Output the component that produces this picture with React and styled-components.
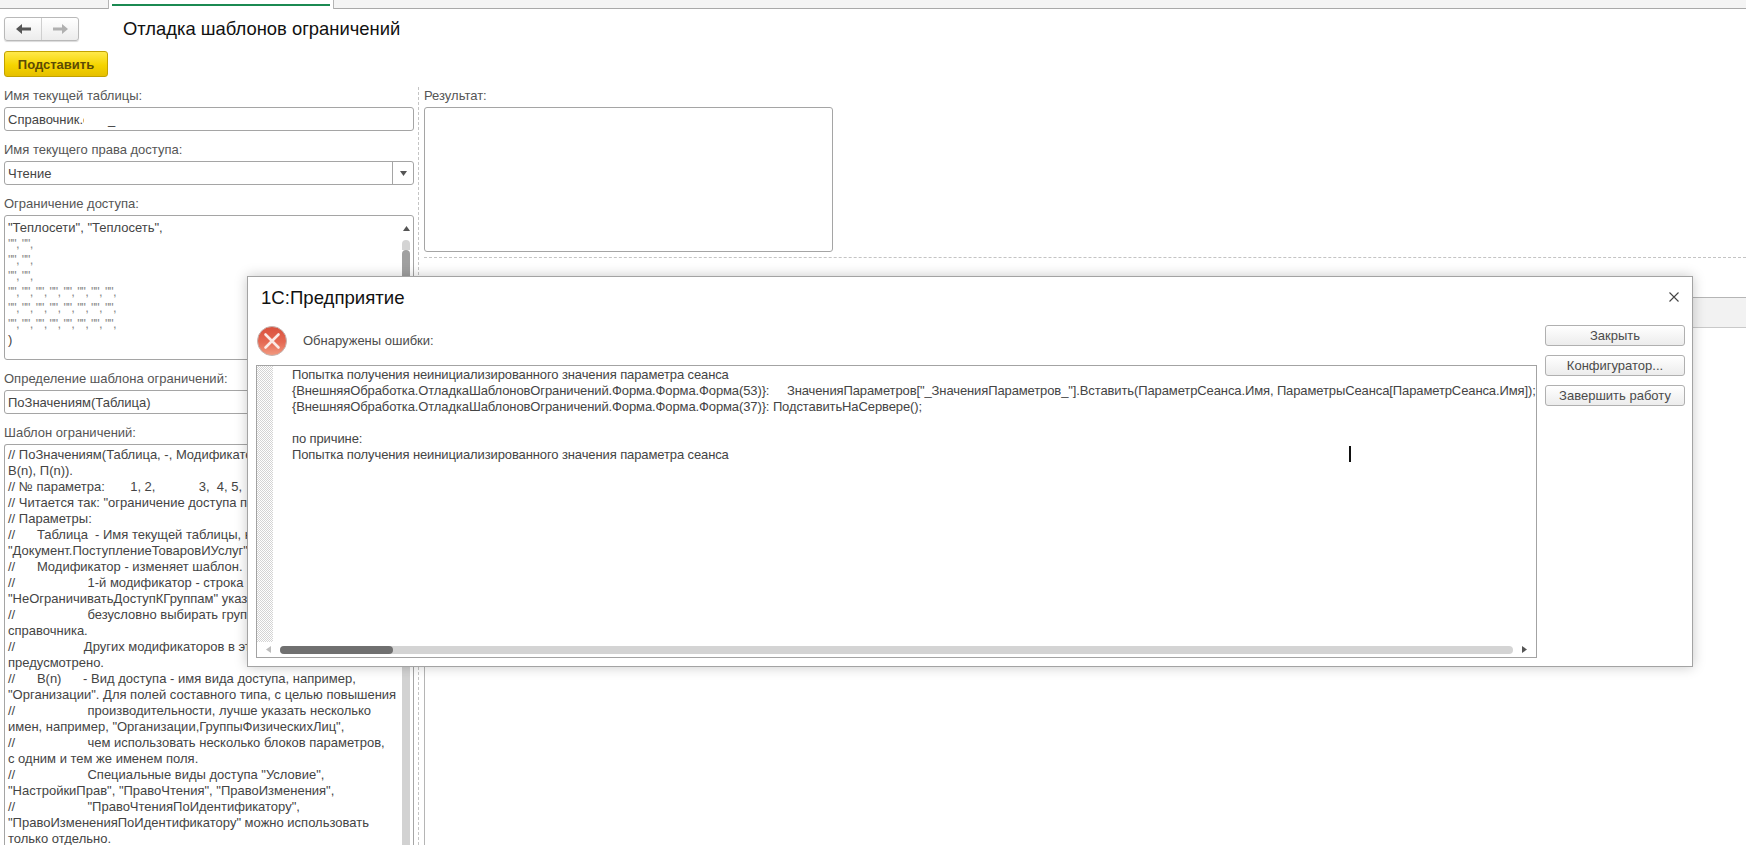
import React from 'react';
import styled, { createGlobalStyle } from 'styled-components';

const GlobalStyle = createGlobalStyle`
  html, body {
    margin: 0;
    padding: 0;
    background: #fff;
    overflow: hidden;
  }
  body {
    font-family: "Liberation Sans", Arial, sans-serif;
    font-size: 13px;
    color: #4b4b4b;
  }
`;

const restrictionRows = [2, 2, 2, 8, 8, 8];

const templateLines = [
  '// ПоЗначениям(Таблица, -, Модификатор, В(1), П(1), ... ,',
  'В(n), П(n)).',
  '// № параметра:       1, 2,            3,  4, 5,',
  '// Читается так: "ограничение доступа по значениям"',
  '// Параметры:',
  '//      Таблица  - Имя текущей таблицы, например,',
  '"Документ.ПоступлениеТоваровИУслуг".',
  '//      Модификатор - изменяет шаблон.',
  '//                    1-й модификатор - строка',
  '"НеОграничиватьДоступКГруппам" указывает,',
  '//                    безусловно выбирать группы',
  'справочника.',
  '//                   Других модификаторов в этом шаблоне не',
  'предусмотрено.',
  '//      В(n)      - Вид доступа - имя вида доступа, например,',
  '"Организации". Для полей составного типа, с целью повышения',
  '//                    производительности, лучше указать несколько',
  'имен, например, "Организации,ГруппыФизическихЛиц",',
  '//                    чем использовать несколько блоков параметров,',
  'с одним и тем же именем поля.',
  '//                    Специальные виды доступа "Условие",',
  '"НастройкиПрав", "ПравоЧтения", "ПравоИзменения",',
  '//                    "ПравоЧтенияПоИдентификатору",',
  '"ПравоИзмененияПоИдентификатору" можно использовать',
  'только отдельно.',
];

const errorLines = [
  'Попытка получения неинициализированного значения параметра сеанса',
  '{ВнешняяОбработка.ОтладкаШаблоновОграничений.Форма.Форма.Форма(53)}:     ЗначенияПараметров["_ЗначенияПараметров_"].Вставить(ПараметрСеанса.Имя, ПараметрыСеанса[ПараметрСеанса.Имя]);',
  '{ВнешняяОбработка.ОтладкаШаблоновОграничений.Форма.Форма.Форма(37)}: ПодставитьНаСервере();',
  ' ',
  'по причине:',
  'Попытка получения неинициализированного значения параметра сеанса',
];

const dialogButtons = ['Закрыть', 'Конфигуратор...', 'Завершить работу'];

function Triangle({ dir, color = '#555' }) {
  const points = {
    up: '0,5 3.5,0 7,5',
    down: '0,0 7,0 3.5,5',
    left: '5,0 5,7 0,3.5',
    right: '0,0 0,7 5,3.5',
  };
  const vertical = dir === 'up' || dir === 'down';
  return (
    <svg width={vertical ? 7 : 5} height={vertical ? 5 : 7} viewBox={vertical ? '0 0 7 5' : '0 0 5 7'}>
      <polygon points={points[dir]} fill={color} />
    </svg>
  );
}

function Arrow({ flip, color }) {
  return (
    <svg width="15" height="12" viewBox="0 0 15 12" style={flip ? { transform: 'scaleX(-1)' } : undefined}>
      <path d="M0 6 L6 1 V4.5 H15 V7.5 H6 V11 Z" fill={color} />
    </svg>
  );
}

function ErrorIcon() {
  return (
    <svg width="30" height="30" viewBox="0 0 30 30">
      <defs>
        <linearGradient id="errFill" x1="0" y1="0" x2="0" y2="1">
          <stop offset="0%" stopColor="#d9503c" />
          <stop offset="55%" stopColor="#e56a54" />
          <stop offset="100%" stopColor="#f29a80" />
        </linearGradient>
      </defs>
      <circle cx="15" cy="15" r="14.5" fill="url(#errFill)" stroke="#c4b4b0" strokeWidth="1" />
      <path d="M8.5 8.5 L21.5 21.5 M21.5 8.5 L8.5 21.5" stroke="#fbeae6" strokeWidth="2.6" strokeLinecap="round" />
    </svg>
  );
}

export default function App() {
  return (
    <>
      <GlobalStyle />
      <Page>
        <TabStrip>
          <ActiveTab>
            <TabMark />
          </ActiveTab>
        </TabStrip>

        <Header>
          <NavGroup>
            <NavButton><Arrow color="#555" /></NavButton>
            <NavButton $divided><Arrow flip color="#b0b0b0" /></NavButton>
          </NavGroup>
          <Title>Отладка шаблонов ограничений</Title>
        </Header>

        <PrimaryButton>Подставить</PrimaryButton>

        <Columns>
          <LeftColumn>
            <Field>
              <FieldLabel>Имя текущей таблицы:</FieldLabel>
              <Input>
                <ClippedValue>Справочник.с</ClippedValue>
                <Underscore>_</Underscore>
              </Input>
            </Field>

            <Field>
              <FieldLabel>Имя текущего права доступа:</FieldLabel>
              <Input>
                <InputValue>Чтение</InputValue>
                <ComboButton><Triangle dir="down" /></ComboButton>
              </Input>
            </Field>

            <Field>
              <FieldLabel>Ограничение доступа:</FieldLabel>
              <TextArea $height={145}>
                <AreaText>
                  <Line>"Теплосети", "Теплосеть",</Line>
                  {restrictionRows.map((count, i) => (
                    <QuoteRow key={i}>{Array(count).fill('"",').join(' ')}</QuoteRow>
                  ))}
                  <Line>)</Line>
                </AreaText>
                <VScroll>
                  <ScrollArrow><Triangle dir="up" /></ScrollArrow>
                  <ThumbCap />
                  <ThumbBody />
                </VScroll>
              </TextArea>
            </Field>

            <Field>
              <FieldLabel>Определение шаблона ограничений:</FieldLabel>
              <Input>
                <InputValue>ПоЗначениям(Таблица)</InputValue>
              </Input>
            </Field>

            <Field>
              <FieldLabel>Шаблон ограничений:</FieldLabel>
              <TemplateArea>
                <TemplateText>
                  {templateLines.map((line, i) => <Line key={i}>{line}</Line>)}
                </TemplateText>
                <TemplateScroll />
              </TemplateArea>
            </Field>
          </LeftColumn>

          <RightColumn>
            <ResultField>
              <FieldLabel>Результат:</FieldLabel>
              <ResultBox />
            </ResultField>
            <DashedRule />
            <GrayBar />
            <LowerPanel />
          </RightColumn>
        </Columns>

        <Dialog>
          <DialogMain>
            <DialogTitle>1С:Предприятие</DialogTitle>
            <MessageRow>
              <ErrorIcon />
              <Message>Обнаружены ошибки:</Message>
            </MessageRow>
            <ErrorBox>
              <ErrorBody>
                <Gutter />
                <ErrorText>
                  {errorLines.map((line, i) => <Line key={i}>{line}</Line>)}
                </ErrorText>
              </ErrorBody>
              <HScroll>
                <HArrow><Triangle dir="left" color="#bdbdbd" /></HArrow>
                <HTrack><HThumb /></HTrack>
                <HArrow><Triangle dir="right" color="#555" /></HArrow>
              </HScroll>
            </ErrorBox>
          </DialogMain>
          <DialogSide>
            <CloseRow>
              <svg width="10" height="10" viewBox="0 0 10 10">
                <path d="M0.5 0.5 L9.5 9.5 M9.5 0.5 L0.5 9.5" stroke="#444" strokeWidth="1.1" fill="none" />
              </svg>
            </CloseRow>
            {dialogButtons.map((label) => <DialogButton key={label}>{label}</DialogButton>)}
          </DialogSide>
        </Dialog>

        <TextCursor />
      </Page>
    </>
  );
}

const Page = styled.div`
  position: relative;
  width: 1746px;
  height: 845px;
  overflow: hidden;
  display: flex;
  flex-direction: column;
`;

const TabStrip = styled.div`
  flex: none;
  height: 8px;
  background: #f4f4f4;
  border-bottom: 1px solid #a9a9a9;
  padding-left: 108px;
`;

const ActiveTab = styled.div`
  width: 226px;
  height: 9px;
  background: #fff;
  border-left: 1px solid #b5b5b5;
  border-right: 1px solid #b5b5b5;
  padding: 4px 3px 0;
  box-sizing: border-box;
`;

const TabMark = styled.div`
  height: 2px;
  background: #1b8a52;
`;

const Header = styled.div`
  flex: none;
  display: flex;
  align-items: center;
  gap: 45px;
  padding: 8px 0 0 4px;
`;

const NavGroup = styled.div`
  display: flex;
  height: 24px;
  box-sizing: border-box;
  border: 1px solid #b9b9b9;
  border-radius: 3px;
  background: linear-gradient(#fff, #ececec);
  box-shadow: 0 1px 1px rgba(0, 0, 0, 0.15);
`;

const NavButton = styled.div`
  width: 36px;
  display: flex;
  align-items: center;
  justify-content: center;
  border-left: ${(p) => (p.$divided ? '1px solid #cfcfcf' : 'none')};
`;

const Title = styled.div`
  font-size: 18.4px;
  line-height: 24px;
  color: #111;
  margin-left: -1px;
`;

const PrimaryButton = styled.div`
  flex: none;
  width: 104px;
  height: 26px;
  box-sizing: border-box;
  margin: 10px 0 0 4px;
  display: flex;
  align-items: center;
  justify-content: center;
  border: 1px solid #c2a200;
  border-radius: 3px;
  background: linear-gradient(#ffe94a, #f5d400 55%, #e6c000);
  font-size: 13px;
  font-weight: bold;
  color: #5c4a05;
`;

const Columns = styled.div`
  flex: 1;
  display: flex;
  margin-top: 10px;
  min-height: 0;
`;

const LeftColumn = styled.div`
  flex: none;
  width: 414px;
  box-sizing: border-box;
  padding-left: 4px;
  display: flex;
  flex-direction: column;
  gap: 10px;
`;

const Field = styled.div`
  display: flex;
  flex-direction: column;
  min-height: 0;
  &:last-child {
    flex: 1;
  }
`;

const FieldLabel = styled.div`
  height: 20px;
  box-sizing: border-box;
  padding-top: 1px;
  line-height: 16px;
  color: #555;
  white-space: nowrap;
`;

const Input = styled.div`
  height: 24px;
  box-sizing: border-box;
  border: 1px solid #a5a5a5;
  border-radius: 3px;
  padding-left: 3px;
  display: flex;
  align-items: center;
  color: #444;
`;

const InputValue = styled.span`
  flex: 1;
`;

const ClippedValue = styled.span`
  width: 76px;
  overflow: hidden;
  white-space: nowrap;
`;

const Underscore = styled.span`
  margin-left: 24px;
  color: #333;
`;

const ComboButton = styled.div`
  width: 20px;
  align-self: stretch;
  border-left: 1px solid #a5a5a5;
  display: flex;
  align-items: center;
  justify-content: center;
`;

const TextArea = styled.div`
  height: ${(p) => p.$height}px;
  box-sizing: border-box;
  border: 1px solid #a5a5a5;
  border-radius: 3px;
  display: flex;
  overflow: hidden;
`;

const AreaText = styled.div`
  flex: 1;
  padding: 4px 0 0 3px;
  min-width: 0;
`;

const Line = styled.div`
  height: 16px;
  line-height: 16px;
  white-space: pre;
  color: #444;
`;

const QuoteRow = styled.div`
  height: 16px;
  line-height: 16px;
  white-space: pre;
  letter-spacing: -0.65px;
  color: #8a8a8a;
`;

const VScroll = styled.div`
  flex: none;
  width: 8px;
  margin-right: 3px;
  display: flex;
  flex-direction: column;
  align-items: center;
`;

const ScrollArrow = styled.div`
  height: 24px;
  display: flex;
  align-items: center;
  justify-content: center;
`;

const ThumbCap = styled.div`
  width: 8px;
  height: 10px;
  background: #d4d4d4;
  border-radius: 4px 4px 0 0;
`;

const ThumbBody = styled.div`
  width: 8px;
  flex: 1;
  background: #a0a0a0;
  border-radius: 4px 4px 0 0;
`;

const TemplateArea = styled.div`
  flex: 1;
  min-height: 0;
  box-sizing: border-box;
  border: 1px solid #a5a5a5;
  border-bottom: none;
  border-radius: 3px 3px 0 0;
  display: flex;
  overflow: hidden;
`;

const TemplateText = styled.div`
  flex: 1;
  padding: 2px 0 0 3px;
  min-width: 0;
  overflow: hidden;
`;

const TemplateScroll = styled.div`
  flex: none;
  width: 8px;
  margin-right: 3px;
  background: #d2d2d2;
`;

const RightColumn = styled.div`
  flex: 1;
  margin-left: 4px;
  border-left: 1px dashed #c4c4c4;
  display: flex;
  flex-direction: column;
  padding-left: 5px;
`;

const ResultField = styled.div`
  flex: none;
  display: flex;
  flex-direction: column;
`;

const ResultBox = styled.div`
  width: 409px;
  height: 145px;
  box-sizing: border-box;
  border: 1px solid #a5a5a5;
  border-radius: 3px;
`;

const DashedRule = styled.div`
  flex: none;
  margin-top: 5px;
  border-top: 1px dashed #c4c4c4;
`;

const GrayBar = styled.div`
  flex: none;
  height: 31px;
  box-sizing: border-box;
  margin-top: 39px;
  background: #f2f2f2;
  border-top: 1px solid #b5b5b5;
  border-bottom: 1px solid #c9c9c9;
`;

const LowerPanel = styled.div`
  flex: 1;
  border-left: 1px solid #b5b5b5;
`;

const Dialog = styled.div`
  position: absolute;
  left: 247px;
  top: 276px;
  width: 1446px;
  height: 391px;
  box-sizing: border-box;
  display: flex;
  background: #fff;
  border: 1px solid #a3a3a3;
  box-shadow: 0 0 12px rgba(0, 0, 0, 0.22);
  padding: 0 7px 0 8px;
  gap: 8px;
`;

const DialogMain = styled.div`
  width: 1281px;
  flex: none;
  display: flex;
  flex-direction: column;
`;

const DialogTitle = styled.div`
  height: 49px;
  box-sizing: border-box;
  padding: 9px 0 0 5px;
  font-size: 18.6px;
  line-height: 24px;
  color: #111;
`;

const MessageRow = styled.div`
  height: 30px;
  display: flex;
  align-items: center;
  gap: 16px;
  margin-left: 1px;
  margin-bottom: 9px;
`;

const Message = styled.div`
  color: #4b4b4b;
  margin-top: -2px;
`;

const ErrorBox = styled.div`
  height: 293px;
  box-sizing: border-box;
  border: 1px solid #a3a3a3;
  display: flex;
  flex-direction: column;
`;

const ErrorBody = styled.div`
  flex: 1;
  display: flex;
  min-height: 0;
`;

const Gutter = styled.div`
  flex: none;
  width: 16px;
  background: repeating-conic-gradient(#d4d4d4 0 25%, #fff 0 50%) 0 0 / 2px 2px;
`;

const ErrorText = styled.div`
  flex: 1;
  min-width: 0;
  padding: 1px 0 0 19px;
  letter-spacing: -0.11px;
`;

const HScroll = styled.div`
  flex: none;
  height: 15px;
  display: flex;
  align-items: center;
`;

const HArrow = styled.div`
  flex: none;
  width: 23px;
  display: flex;
  align-items: center;
  justify-content: center;
`;

const HTrack = styled.div`
  flex: 1;
  height: 8px;
  background: #d4d4d4;
  border-radius: 4px;
`;

const HThumb = styled.div`
  width: 113px;
  height: 8px;
  background: #707070;
  border-radius: 4px;
`;

const DialogSide = styled.div`
  flex: 1;
  display: flex;
  flex-direction: column;
  gap: 9px;
`;

const CloseRow = styled.div`
  height: 39px;
  box-sizing: border-box;
  padding: 15px 6px 0 0;
  display: flex;
  justify-content: flex-end;
  align-items: flex-start;
`;

const DialogButton = styled.div`
  height: 21px;
  box-sizing: border-box;
  border: 1px solid #b0b0b0;
  border-radius: 3px;
  background: linear-gradient(#fff, #ececec);
  display: flex;
  align-items: center;
  justify-content: center;
  color: #4b4b4b;
`;

const TextCursor = styled.div`
  position: absolute;
  left: 1349px;
  top: 446px;
  width: 2px;
  height: 16px;
  background: #111;
`;
